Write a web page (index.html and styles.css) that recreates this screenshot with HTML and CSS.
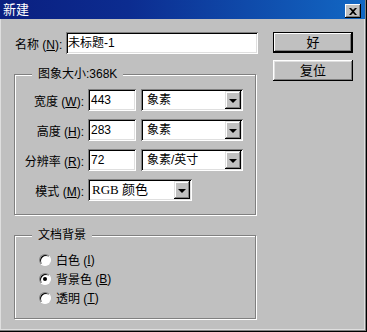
FILE: index.html
```html
<!DOCTYPE html>
<html lang="zh-CN">
<head>
  <meta charset="utf-8" />
  <title>新建</title>
<link rel="stylesheet" href="styles.css">
</head>
<body>
<div class="window">
  <div class="titlebar">
    <span class="title">新建</span>
    <span class="close">
      <svg width="8" height="7" viewBox="0 0 8 7"><path d="M0 0h2l2 2 2-2h2L5 3.5 8 7H6L4 5 2 7H0l3-3.5z" fill="#000"/></svg>
    </span>
  </div>

  <div class="content">
    <div class="main">
      <div class="name-row">
        <span class="name-label">名称 (<u>N</u>):</span>
        <div class="field name-field">未标题-1</div>
      </div>

      <!-- 图象大小 -->
      <div class="group size-group">
        <span class="legend">图象大小:368K</span>
        <div class="row">
          <span class="label">宽度 (<u>W</u>):</span>
          <div class="field num">443</div>
          <div class="select unit"><span>象素</span><span class="drop"></span></div>
        </div>
        <div class="row">
          <span class="label">高度 (<u>H</u>):</span>
          <div class="field num">283</div>
          <div class="select unit"><span>象素</span><span class="drop"></span></div>
        </div>
        <div class="row">
          <span class="label">分辨率 (<u>R</u>):</span>
          <div class="field num">72</div>
          <div class="select unit"><span>象素/英寸</span><span class="drop"></span></div>
        </div>
        <div class="row">
          <span class="label">模式 (<u>M</u>):</span>
          <div class="select mode"><span class="rgb">RGB 颜色</span><span class="drop"></span></div>
        </div>
      </div>

      <!-- 文档背景 -->
      <div class="group bg-group">
        <span class="legend">文档背景</span>
        <div class="radio-row"><span class="radio"></span>白色 (<u>I</u>)</div>
        <div class="radio-row"><span class="radio checked"></span>背景色 (<u>B</u>)</div>
        <div class="radio-row"><span class="radio"></span>透明 (<u>T</u>)</div>
      </div>
    </div>

    <div class="buttons">
      <div class="btn default">好</div>
      <div class="btn">复位</div>
    </div>
  </div>
</div>
</body>
</html>
```

FILE: styles.css
```css
body{
  margin: 0;
  font-family: 'Liberation Sans', 'Noto Sans CJK SC', sans-serif;
  font-size: 12px;
  color: #000;
}
.window{
  width: 367px;
  height: 332px;
  box-sizing: border-box;
  background: #c0c0c0;
  box-shadow: inset -1px -1px 0 #000, inset -2px -2px 0 #808080, inset 1px 0 0 #dfdfdf, inset -3px -3px 0 #dfdfdf;
}
.titlebar{
  height: 19px;
  margin-right: 2px;
  padding: 0 4px 0 3px;
  display: flex;
  align-items: center;
  justify-content: space-between;
  background: linear-gradient(to right, #0a1f80 0%, #0c2c90 35%, #1268c4 100%);
}
.title{
  color: #fff;
  font-size: 13px;
  line-height: 19px;
}
.close{
  width: 16px;
  height: 14px;
  margin-top: 3px;
  display: flex;
  align-items: center;
  justify-content: center;
  background: #c0c0c0;
  box-shadow: inset -1px -1px 0 #000, inset 1px 1px 0 #fff, inset -2px -2px 0 #808080;
}

.content{
  display: flex;
  padding-top: 13px;
}
.main{
  width: 244px;
  margin-left: 14px;
}
.buttons{
  width: 80px;
  margin-left: 15px;
  display: flex;
  flex-direction: column;
  gap: 7px;
}

/* 3D borders */
.field, .select{
  box-sizing: border-box;
  height: 22px;
  background: #fff;
  box-shadow: inset 1px 1px 0 #808080, inset -1px -1px 0 #fff, inset 2px 2px 0 #000, inset -2px -2px 0 #dfdfdf;
  line-height: 22px;
}
.field{
  padding-left: 3px;
}
.btn{
  height: 21px;
  line-height: 21px;
  text-align: center;
  font-size: 13px;
  box-shadow: inset -1px -1px 0 #000, inset 1px 1px 0 #fff, inset -2px -2px 0 #808080, inset 2px 2px 0 #dfdfdf;
}
.btn.default{
  box-shadow: inset 0 0 0 1px #000, inset -2px -2px 0 #000, inset 2px 2px 0 #fff, inset -3px -3px 0 #808080;
}

.name-row{
  display: flex;
  align-items: center;
  height: 22px;
}
.name-label{
  width: 52px;
  padding-left: 1px;
  box-sizing: border-box;
}
.name-field{
  width: 192px;
  padding-left: 2px;
}

.group{
  position: relative;
  border: 1px solid #808080;
  box-shadow: 1px 1px 0 #fff, inset 1px 1px 0 #fff;
  width: 242px;
  box-sizing: border-box;
}
.legend{
  position: absolute;
  top: -8px;
  left: 17px;
  padding: 0 6px;
  background: #c0c0c0;
  line-height: 15px;
}
.size-group{
  margin-top: 20px;
  padding: 14px 0 13px;
  display: flex;
  flex-direction: column;
  gap: 8px;
}
.row{
  display: flex;
  align-items: center;
  height: 22px;
}
.label{
  width: 69px;
  margin-right: 4px;
  text-align: right;
}
.num{
  width: 48px;
  margin-right: 5px;
}
.select{
  display: flex;
  justify-content: space-between;
  padding: 2px 2px 2px 6px;
  line-height: 18px;
}
.unit{
  width: 102px;
}
.mode{
  width: 104px;
  padding-left: 4px;
}
.rgb{
  font-family: 'Liberation Serif', 'Noto Sans CJK SC', serif;
  font-size: 13px;
}
.drop{
  width: 16px;
  height: 18px;
  background: #c0c0c0;
  box-shadow: inset -1px -1px 0 #000, inset 1px 1px 0 #dfdfdf, inset -2px -2px 0 #808080, inset 2px 2px 0 #fff;
  display: flex;
  align-items: center;
  justify-content: center;
}
.drop::after{
  content: "";
  border-left: 4px solid transparent;
  border-right: 4px solid transparent;
  border-top: 4px solid #000;
  margin-top: 1px;
}

.bg-group{
  margin-top: 20px;
  padding: 14px 0 11px 24px;
}
.radio-row{
  display: flex;
  align-items: center;
  height: 19px;
}
.radio{
  width: 12px;
  height: 12px;
  margin-right: 5px;
  border-radius: 50%;
  background: #fff;
  box-sizing: border-box;
  border: 1px solid;
  border-color: #808080 #fff #fff #808080;
  box-shadow: inset 1px 1px 0 #000;
  display: flex;
  align-items: center;
  justify-content: center;
}
.radio.checked::after{
  content: "";
  width: 4px;
  height: 4px;
  border-radius: 50%;
  background: #000;
}
```
